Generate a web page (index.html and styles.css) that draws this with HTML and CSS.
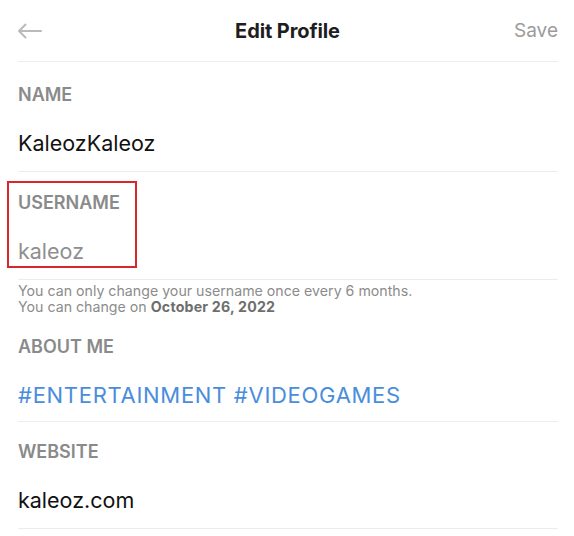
FILE: index.html
```html
<!DOCTYPE html>
<html>
<head>
<meta charset="utf-8">
<link rel="stylesheet" href="styles.css">
</head>
<body>
<div class="screen">
  <header class="topbar">
    <span class="back">
      <svg width="25" height="16" viewBox="0 0 25 16"><path d="M24 8H2M8.5 1.5L2 8l6.5 6.5" fill="none" stroke="#bababa" stroke-width="2" stroke-linecap="round" stroke-linejoin="round"/></svg>
    </span>
    <h1 class="title">Edit Profile</h1>
    <span class="save">Save</span>
  </header>
  <section class="field first">
    <div class="label">NAME</div>
    <div class="value">KaleozKaleoz</div>
  </section>
  <section class="field">
    <div class="label">USERNAME</div>
    <div class="value muted">kaleoz</div>
    <div class="mark"></div>
  </section>
  <p class="hint">You can only change your username once every 6 months.<br>You can change on <b>October 26, 2022</b></p>
  <section class="field about">
    <div class="label">ABOUT ME</div>
    <div class="value tags">#ENTERTAINMENT #VIDEOGAMES</div>
  </section>
  <section class="field last">
    <div class="label">WEBSITE</div>
    <div class="value">kaleoz.com</div>
  </section>
</div>
</body>
</html>
```
FILE: styles.css
```css
* { box-sizing: border-box; }
html, body { margin: 0; padding: 0; background: #fff; }
body { font-family: Inter, "Noto Sans", sans-serif; }
.screen { padding: 0 16px 0 18px; }
.topbar {
  height: 62px;
  display: flex;
  align-items: center;
  justify-content: space-between;
  border-bottom: 1px solid #ececec;
}
.back { width: 70px; display: flex; align-items: center; margin-left: -1px; }
.back svg { display: block; }
.title {
  margin: 0;
  font-size: 20px;
  font-weight: 700;
  color: #1d1d22;
  letter-spacing: -0.1px;
}
.save { width: 70px; text-align: right; font-size: 19px; color: #9b9b9b; }
.field {
  position: relative;
  border-bottom: 1px solid #ececec;
  padding: 19px 0 13px;
}
.field.first { padding-top: 21px; }
.field.about { padding-bottom: 11px; }
.field.last { padding-top: 18px; }
.label {
  font-size: 18px;
  line-height: 24px;
  font-weight: 600;
  color: #8a8a8a;
}
.value {
  margin-top: 21px;
  font-size: 21.5px;
  line-height: 30px;
  color: #111;
}
.value.muted { color: #8f8f8f; }
.value.tags { color: #4a8ddc; font-size: 22px; letter-spacing: 0.7px; }
.mark {
  position: absolute;
  left: -11px;
  top: 9px;
  width: 130px;
  height: 87px;
  border: 2px solid #d7262c;
}
.hint {
  margin: 0;
  padding: 3px 0 1.5px;
  font-size: 14.2px;
  line-height: 15.5px;
  color: #8c8c8c;
}
.hint b { color: #6e6e6e; font-weight: 700; letter-spacing: 0.2px; }
```
